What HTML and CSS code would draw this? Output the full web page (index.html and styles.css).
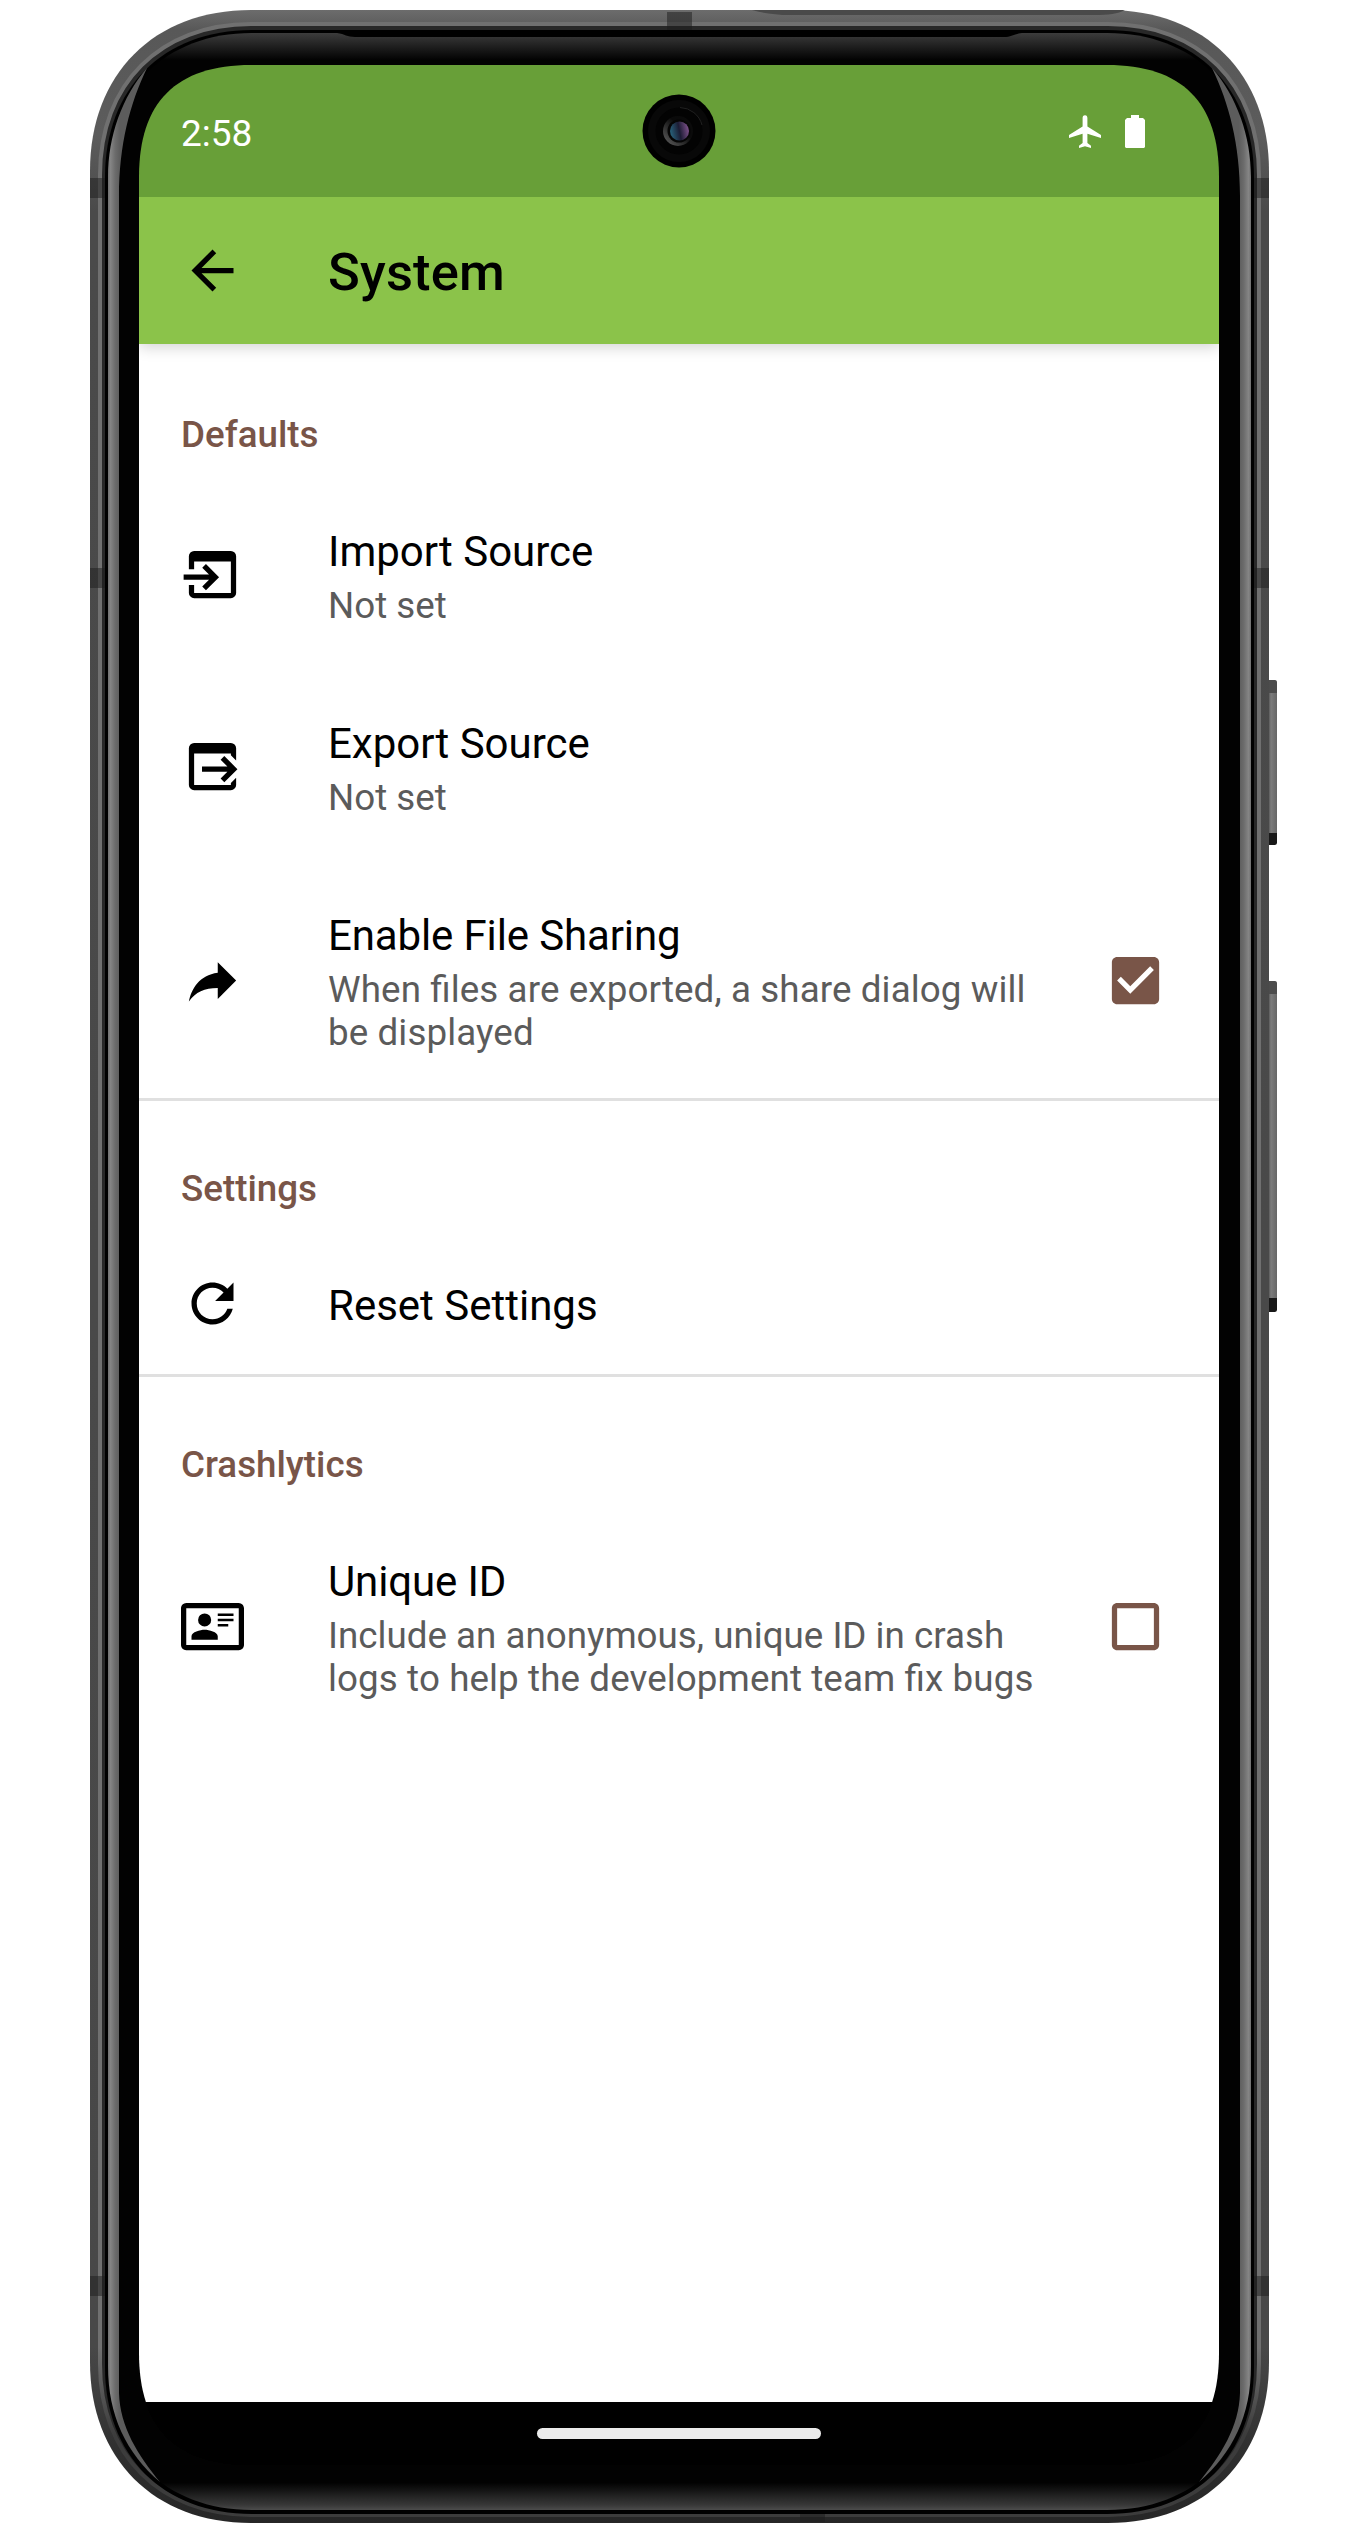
FILE: index.html
```html
<!DOCTYPE html>
<html lang="en">
<head>
<meta charset="utf-8">
<title>System</title>
<link rel="stylesheet" href="styles.css">
</head>
<body>
<div class="device">
  <svg class="device-frame" viewBox="0 0 1367 2533" aria-hidden="true">
    <defs>
      <linearGradient id="metal" gradientUnits="userSpaceOnUse" x1="0" y1="10" x2="0" y2="2523">
        <stop offset="0" stop-color="#6c6c6c"/><stop offset=".008" stop-color="#585858"/><stop offset=".05" stop-color="#5c5c5c"/><stop offset=".08" stop-color="#4a4a4a"/>
        <stop offset=".93" stop-color="#484848"/><stop offset=".97" stop-color="#303030"/><stop offset="1" stop-color="#262626"/>
      </linearGradient>
      <linearGradient id="shine" gradientUnits="userSpaceOnUse" x1="0" y1="10" x2="0" y2="2523">
        <stop offset="0" stop-color="#707070"/><stop offset=".93" stop-color="#707070"/><stop offset=".965" stop-color="#3c3c3c"/><stop offset="1" stop-color="#3c3c3c"/>
      </linearGradient>
      <linearGradient id="glass" gradientUnits="userSpaceOnUse" x1="0" y1="33" x2="0" y2="2510">
        <stop offset="0" stop-color="#3c3c3c"/><stop offset=".006" stop-color="#1c1c1c"/><stop offset=".011" stop-color="#020202"/>
        <stop offset=".989" stop-color="#020202"/><stop offset=".998" stop-color="#383838"/><stop offset="1" stop-color="#4c4c4c"/>
      </linearGradient>
      <linearGradient id="bevel-left" gradientUnits="userSpaceOnUse" x1="108" x2="120" y1="0" y2="0">
        <stop offset="0" stop-color="#707070"/><stop offset=".2" stop-color="#858585"/><stop offset=".6" stop-color="#6c6c6c"/><stop offset="1" stop-color="#5c5c5c"/>
      </linearGradient>
      <linearGradient id="bevel-right" gradientUnits="userSpaceOnUse" x1="1251" x2="1239" y1="0" y2="0">
        <stop offset="0" stop-color="#707070"/><stop offset=".2" stop-color="#858585"/><stop offset=".6" stop-color="#6c6c6c"/><stop offset="1" stop-color="#5c5c5c"/>
      </linearGradient>
      <linearGradient id="key" x1="0" x2="1" y1="0" y2="0">
        <stop offset="0" stop-color="#3c3c3c"/><stop offset=".4" stop-color="#7c7c7c"/><stop offset="1" stop-color="#666"/>
      </linearGradient>
    </defs>
    <g>
      <rect x="1267" y="680" width="10" height="165" rx="2" fill="url(#key)"/>
      <path d="M1269 680h6l2 2v11h-8z" fill="#4c4c4c"/><path d="M1269 833h8v10l-2 2h-6z" fill="#181818"/>
      <rect x="1267" y="981" width="10" height="331" rx="2" fill="url(#key)"/>
      <path d="M1269 981h6l2 2v11h-8z" fill="#4c4c4c"/><path d="M1269 1298h8v12l-2 2h-6z" fill="#181818"/>
    </g>
    <path fill="url(#metal)" d="M90 171C90 74 154 10 251 10H1108C1205 10 1269 74 1269 171V2362C1269 2459 1205 2523 1108 2523H251C154 2523 90 2459 90 2362Z"/>
    <path fill="#4a4a4a" d="M752 10H1125C1118 14 1108 15 1095 15H790C775 15 762 13 752 10Z"/>
    <path fill="#282828" stroke="url(#shine)" stroke-width="4" d="M100 175C100 84 160 24 251 24H1108C1199 24 1259 84 1259 175V2364C1259 2455 1199 2515 1108 2515H251C160 2515 100 2455 100 2364Z"/>
    <path d="M90 178h17v20h-17zM1253 178h16v20h-16zM90 568h17v20h-17zM1253 568h16v20h-16zM90 2276h17v20h-17zM1253 2276h16v20h-16zM667 12h25v19h-25zM800 2514h25v8h-25z" fill="#1c1c1c" opacity=".5"/>
    <path d="M105 177C105 88 163 30 252 30H1107C1196 30 1254 88 1254 177V2367C1254 2456 1196 2514 1107 2514H252C163 2514 105 2456 105 2367Z"/>
    <path fill="url(#glass)" d="M108 177C108 90 165 33 252 33H1107C1194 33 1251 90 1251 177V2366C1251 2453 1194 2510 1107 2510H252C165 2510 108 2453 108 2366Z"/>
    <path d="M337 33C345 34 347 37 355 37H1004C1012 37 1014 34 1022 33Z"/>
    <path fill="url(#bevel-left)" d="M108 177C108 136 122 97 147 68C130 103 119 145 119 196V2393C120 2427 138 2455 160 2482C126 2453 108 2415 108 2366Z"/>
    <path fill="url(#bevel-right)" d="M1251 177C1251 136 1237 97 1212 68C1229 103 1240 145 1240 196V2393C1239 2427 1221 2455 1199 2482C1233 2453 1251 2415 1251 2366Z"/>
  </svg>

  <div class="screen">
    <div class="status-bar">
      <span>2:58</span>
      <div class="status-icons">
        <svg class="airplane" viewBox="0 0 32 33"><path fill="#fff" d="M16 .3C17.700.3 18.400 1.500 18.400 3V11.500L32 20V23L18.400 18.800V28L22 30.800V33L16 31.300 10 33V30.800L13.600 28V18.800L0 23V20L13.600 11.500V3C13.600 1.500 14.300.3 16 .3Z"/></svg>
        <svg class="battery" viewBox="0 0 20 33"><path fill="#fff" d="M6 0h8v3h4l2 2v27l-1 1H1l-1-1V5l2-2h4z"/></svg>
      </div>
      <svg class="camera" viewBox="0 0 74 74">
        <defs>
          <linearGradient id="lens" x1="0" x2="1" y1=".6" y2=".4"><stop offset="0" stop-color="#28647d"/><stop offset=".5" stop-color="#1c1c34"/><stop offset="1" stop-color="#80528c"/></linearGradient>
          <linearGradient id="ring" x1="0" x2="1" y1="1" y2="0"><stop offset="0" stop-color="#666"/><stop offset=".6" stop-color="#0a0a0a"/></linearGradient>
        </defs>
        <circle cx="37" cy="37" r="36.500" fill="#000"/><circle cx="37" cy="37" r="31" fill="#080808"/>
        <circle cx="37" cy="37" r="23.500" fill="#030303"/><path d="M38 13.500A23.500 23.500 0 0 1 60 31" fill="none" stroke="#202020"/>
        <circle cx="36" cy="37" r="15" fill="url(#ring)"/><circle cx="37" cy="37" r="11.500" fill="#050505"/><circle cx="37.500" cy="37" r="9.500" fill="url(#lens)"/>
      </svg>
    </div>

    <header class="app-bar">
      <svg class="icon" viewBox="0 0 24 24"><path d="M20 11H7.830l5.590-5.590L12 4l-8 8 8 8 1.410-1.410L7.830 13H20v-2z"/></svg>
      <h1>System</h1>
    </header>

    <main class="content">
      <section>
        <h2>Defaults</h2>
        <div class="row">
          <svg class="icon" viewBox="0 0 24 24"><path d="M5 3H19A2 2 0 0 1 21 5V19A2 2 0 0 1 19 21H5A2 2 0 0 1 3 19V16H5V19H19V7H5V10H3V5A2 2 0 0 1 5 3ZM9.500 18L14.500 13 9.500 8 8.090 9.410 10.670 12H1V14H10.670L8.090 16.590Z"/></svg>
          <div class="text"><div class="title">Import Source</div><div class="summary">Not set</div></div>
        </div>
        <div class="row">
          <svg class="icon" viewBox="0 0 24 24"><path d="M5 3H19A2 2 0 0 1 21 5V9.670L19 7.670V7H5V19H19V18.330L21 16.330V19A2 2 0 0 1 19 21H5A2 2 0 0 1 3 19V5A2 2 0 0 1 5 3ZM16.500 18L21.500 13 16.500 8 15.090 9.410 17.670 12H8V14H17.670L15.090 16.590Z"/></svg>
          <div class="text"><div class="title">Export Source</div><div class="summary">Not set</div></div>
        </div>
        <div class="row tall">
          <svg class="icon" viewBox="0 0 24 24"><path d="M21 12L14 5V9C7 10 4 15 3 20C5.500 16.500 9 14.900 14 14.900V19L21 12Z"/></svg>
          <div class="text"><div class="title snug">Enable File Sharing</div><div class="summary loose">When files are exported, a share dialog will be displayed</div></div>
          <svg class="icon checkbox" viewBox="0 0 24 24"><path d="M19 3H5c-1.110 0-2 .9-2 2v14c0 1.100.89 2 2 2h14c1.110 0 2-.9 2-2V5c0-1.100-.89-2-2-2zm-9 14l-5-5 1.410-1.410L10 14.170l7.590-7.590L19 8l-9 9z"/></svg>
        </div>
      </section>
      <section>
        <h2>Settings</h2>
        <div class="row short">
          <svg class="icon" viewBox="0 0 24 24"><path d="M17.650 6.350C16.200 4.900 14.210 4 12 4c-4.420 0-7.990 3.580-7.990 8s3.570 8 7.990 8c3.730 0 6.840-2.550 7.730-6h-2.080c-.82 2.330-3.040 4-5.650 4-3.310 0-6-2.690-6-6s2.690-6 6-6c1.660 0 3.140.69 4.220 1.780L13 11h7V4l-2.350 2.350z"/></svg>
          <div class="text"><div class="title">Reset Settings</div></div>
        </div>
      </section>
      <section>
        <h2>Crashlytics</h2>
        <div class="row tall">
          <svg class="icon" viewBox="0 0 24 24"><path d="M22 3H2C.91 3.040.04 3.910 0 5V19C.04 20.090.91 20.960 2 21H22C23.090 20.960 23.960 20.090 24 19V5C23.960 3.910 23.090 3.040 22 3M22 19H2V5H22V19M14 17V15.750C14 14.090 10.660 13.250 9 13.250S4 14.090 4 15.750V17H14M9 7A2.500 2.500 0 1 0 9 12A2.500 2.500 0 0 0 9 7M14 7V8H20V7H14M14 9V10H20V9H14M14 11V12H18V11H14"/></svg>
          <div class="text"><div class="title snug">Unique ID</div><div class="summary">Include an anonymous, unique ID in crash <span class="loose">logs to help the development team fix bugs</span></div></div>
          <svg class="icon checkbox" viewBox="0 0 24 24"><path d="M19 5v14H5V5h14m0-2H5c-1.100 0-2 .9-2 2v14c0 1.100.9 2 2 2h14c1.100 0 2-.9 2-2V5c0-1.100-.9-2-2-2z"/></svg>
        </div>
      </section>
    </main>
    <div class="nav-bar"><div class="home-pill"></div></div>
  </div>
</div>
</body>
</html>
```

FILE: styles.css
```css
* { box-sizing: border-box; }

body {
  margin: 0;
  background: #fff;
  font-family: Roboto, sans-serif;
  color: #000;
}

svg { display: block; }

/* The phone body and the screen share one grid cell */
.device {
  display: grid;
  width: 1367px;
  height: 2533px;
}

.device-frame {
  grid-area: 1 / 1;
  width: 1367px;
  height: 2533px;
}

.screen {
  grid-area: 1 / 1;
  display: flex;
  flex-direction: column;
  width: 1080px;
  height: 2400px;
  margin: 65px 0 0 139px;
  background: #000;
  clip-path: path("M0 112C0 37 37 0 112 0H968C1043 0 1080 37 1080 112V2288C1080 2363 1043 2400 968 2400H112C37 2400 0 2363 0 2288Z");
}

.status-bar {
  position: relative;
  z-index: 2;
  display: flex;
  align-items: center;
  justify-content: space-between;
  flex: none;
  height: 132px;
  padding: 4px 74px 0 42px;
  background: #689f38;
  color: #fff;
  font-size: 37px;
}

.status-icons {
  display: flex;
  gap: 24px;
  margin-top: -4px;
}

.airplane { width: 32px; height: 33px; }
.battery { width: 20px; height: 33px; }

.camera {
  position: absolute;
  top: 29px;
  left: 503px;
  width: 74px;
  height: 74px;
}

.app-bar {
  z-index: 1;
  display: flex;
  align-items: center;
  flex: none;
  gap: 84px;
  height: 147px;
  padding-left: 42px;
  background: #8bc34a;
  box-shadow: 0 3px 14px rgba(0, 0, 0, .18);
}

.app-bar h1 {
  margin: 3px 0 0;
  font-size: 52.5px;
  font-weight: 500;
  letter-spacing: .2px;
  line-height: 62px;
}

.icon {
  flex: none;
  width: 63px;
  height: 63px;
}

.content {
  flex: 1;
  background: #fff;
}

section + section { border-top: 3px solid #e0e0e0; }

h2 {
  height: 134px;
  margin: 0;
  padding: 69px 42px 0;
  color: #795548;
  font-size: 36.75px;
  font-weight: 500;
  line-height: 43px;
}

section + section h2 {
  height: 131px;
  padding-top: 66px;
}

.row {
  display: flex;
  align-items: center;
  gap: 84px;
  height: 192px;
  padding-left: 42px;
}

.row.short { height: 142px; }
.row.tall { height: 236px; }

.text {
  align-self: flex-start;
  width: 725px;
  padding-top: 49px;
}

.title {
  font-size: 42px;
  line-height: 49px;
}

.snug { letter-spacing: -.13px; }

.summary {
  margin-top: 8px;
  color: #5b5b5b;
  font-size: 36.75px;
  line-height: 43px;
}

/* A non-zero spacing would otherwise drop the fi ligature */
.loose {
  font-feature-settings: "liga" 1;
  letter-spacing: .1px;
}

.checkbox {
  margin-left: -33px;
  fill: #795548;
}

.nav-bar {
  display: flex;
  justify-content: center;
  flex: none;
  height: 63px;
  padding-top: 26px;
  background: #000;
}

.home-pill {
  width: 284px;
  height: 11px;
  border-radius: 6px;
  background: #ebebeb;
}
```
